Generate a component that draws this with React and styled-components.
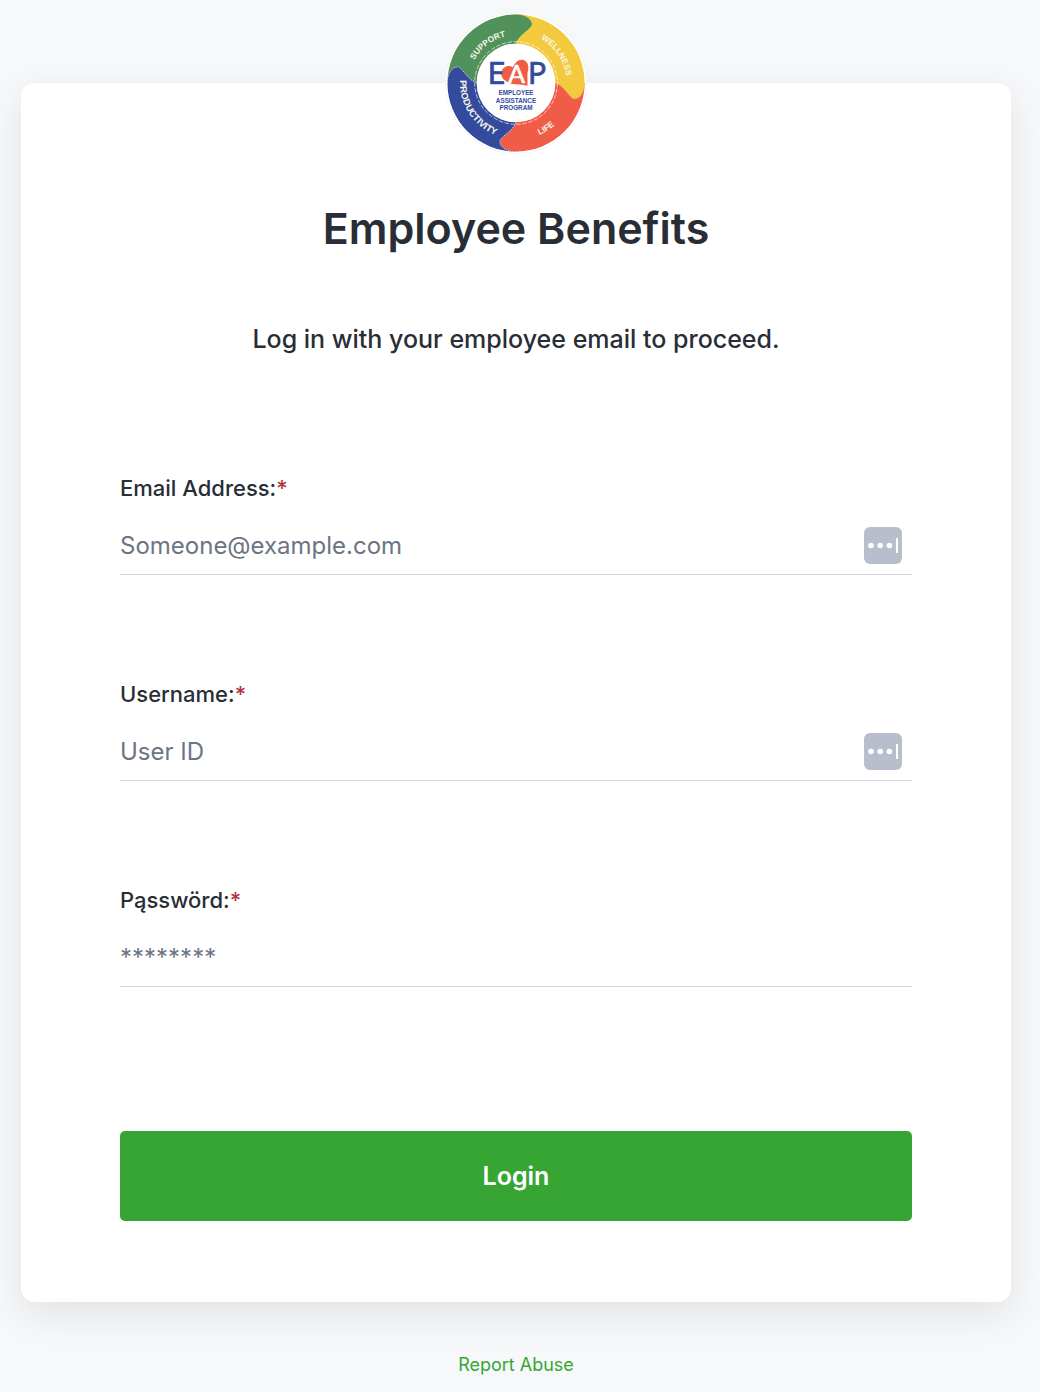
import React from "react";
import styled, { createGlobalStyle } from "styled-components";

const GlobalStyle = createGlobalStyle`
  *, *::before, *::after { box-sizing: border-box; }
  body {
    margin: 0;
    background: #f7f8fa;
    color: #292e36;
    font-family: Inter, "Liberation Sans", sans-serif;
  }
`;

const Page = styled.main`
  display: flex;
  flex-direction: column;
  align-items: center;
  padding: 12px 29px 15px 21px;
`;

const Logo = styled.svg`
  display: block;
  width: 142px;
  height: 142px;
  margin-bottom: -71px;
  z-index: 1;
`;

const Card = styled.section`
  width: 100%;
  padding: 117px 99px 81px;
  border-radius: 14px;
  background: #fff;
  box-shadow: 0 12px 40px rgba(0, 0, 0, 0.09);
`;

const Title = styled.h1`
  margin: 0 0 67px;
  font-size: 43px;
  line-height: 56px;
  font-weight: 600;
  text-align: center;
`;

const Intro = styled.p`
  margin: 0 0 119px;
  font-size: 25px;
  line-height: 32px;
  font-weight: 500;
  text-align: center;
`;

const Form = styled.form`
  display: flex;
  flex-direction: column;
`;

const Fields = styled.div`
  display: flex;
  flex-direction: column;
  gap: 105px;
  margin-bottom: 144px;
`;

const Field = styled.div`
  display: flex;
  flex-direction: column;
  gap: 14px;
`;

const Label = styled.label`
  font-size: 22px;
  line-height: 28px;
  font-weight: 500;
`;

const Required = styled.span`
  color: #b3343f;
`;

const Control = styled.div`
  display: flex;
  align-items: center;
  height: 59px;
  padding-right: 10px;
  border-bottom: 1px solid #d5d7de;
`;

const Input = styled.input`
  flex: 1;
  min-width: 0;
  height: 100%;
  padding: 0;
  border: 0;
  outline: 0;
  background: transparent;
  color: #292e36;
  font: inherit;
  font-size: 24px;

  &::placeholder {
    color: #6b7583;
    opacity: 1;
  }
`;

const FillButton = styled.button`
  flex: none;
  display: block;
  padding: 0;
  border: 0;
  background: none;
  line-height: 0;
  cursor: pointer;
`;

const LoginButton = styled.button`
  height: 90px;
  border: 0;
  border-radius: 5px;
  background: #37a534;
  color: #fff;
  font: inherit;
  font-size: 25px;
  font-weight: 600;
  cursor: pointer;
`;

const ReportLink = styled.a`
  margin-top: 51px;
  color: #37a534;
  font-size: 18px;
  line-height: 24px;
  text-decoration: none;
`;

const SEGMENT =
  "M-206,0 A206,206 0 0 1 0,-206 C34,-206 51,-187 48,-173 C45,-161 9,-144 0,-118 " +
  "A118,118 0 0 0 -118,0 C-144,-9 -161,-45 -173,-48 C-187,-51 -206,-34 -206,0 Z";

const segments = [
  { color: "#51925a", turn: 0 },
  { color: "#f3ca3e", turn: 90 },
  { color: "#f15c48", turn: 180 },
  { color: "#344a9c", turn: 270 },
];

const ringWords = [
  { id: "support", text: "SUPPORT", d: "M-143,0 A143,143 0 0 1 0,-143", at: "59%", size: 25 },
  { id: "wellness", text: "WELLNESS", d: "M0,-152 A152,152 0 0 1 152,0", at: "62%", size: 25 },
  { id: "life", text: "LIFE", d: "M0,171 A171,171 0 0 0 171,0", at: "37%", size: 25 },
  { id: "productivity", text: "PRODUCTIVITY", d: "M-158,-57 A168,168 0 0 0 0,168", at: "48%", size: 28 },
];

function EapLogo() {
  return (
    <Logo viewBox="-213 -213 426 426" role="img" aria-label="EAP Employee Assistance Program">
      <defs>
        <clipPath id="disc"><circle r="206" /></clipPath>
        {ringWords.map((w) => <path key={w.id} id={w.id} d={w.d} />)}
      </defs>
      <circle r="212" fill="#fff" stroke="#eceef1" strokeWidth="2" />
      <g clipPath="url(#disc)">
        {segments.map((s) => (
          <path key={s.color} d={SEGMENT} fill={s.color} stroke={s.color} transform={`rotate(${s.turn})`} />
        ))}
      </g>
      {[180, 270].map((turn) => (
        <path
          key={turn}
          d="M0,-206 C34,-206 51,-187 48,-173 C45,-161 9,-144 0,-118"
          fill="none"
          stroke="#fff"
          strokeWidth="2"
          strokeDasharray="4 3"
          transform={`rotate(${turn})`}
        />
      ))}
      <circle r="124" fill="none" stroke="#fff" strokeOpacity="0.65" strokeWidth="3" strokeDasharray="13 5" />
      <circle r="118" fill="#fff" />
      <g fill="#f6f7e8" fontFamily="Liberation Sans, sans-serif" fontWeight="700" textAnchor="middle">
        {ringWords.map((w) => (
          <text key={w.id} fontSize={w.size}>
            <textPath href={`#${w.id}`} startOffset={w.at}>{w.text}</textPath>
          </text>
        ))}
      </g>
      <path
        d="M-12,3 C-30,-4 -46,-14 -44,-30 C-42,-50 -20,-55 -10,-47 C-4,-60 6,-71 19,-70 C35,-68 41,-50 35,-32 C33,-15 36,-4 34,8 C18,4 5,5 -12,3 Z"
        fill="#f15c48"
      />
      <g fontFamily="Lato, sans-serif" fill="#344a9c">
        <text x="-85" y="2" fontSize="90" stroke="#344a9c" strokeWidth="2">E</text>
        <text x="36" y="2" fontSize="90" stroke="#344a9c" strokeWidth="2">P</text>
        <text x="2" y="1" fontSize="74" fill="#fff" stroke="#fff" strokeWidth="2" textAnchor="middle">A</text>
        <g fontFamily="Liberation Sans, sans-serif" fontSize="19" fontWeight="700" textAnchor="middle">
          <text y="37">EMPLOYEE</text>
          <text y="60">ASSISTANCE</text>
          <text y="82">PROGRAM</text>
        </g>
      </g>
    </Logo>
  );
}

function FillIcon() {
  return (
    <svg width="38" height="37" viewBox="0 0 38 37" aria-hidden="true">
      <rect width="38" height="37" rx="6" fill="#b8becb" />
      <g fill="#fff">
        <circle cx="7" cy="18.5" r="2.8" />
        <circle cx="16.2" cy="18.5" r="2.8" />
        <circle cx="25.4" cy="18.5" r="2.8" />
        <rect x="32" y="11" width="2" height="15" rx="0.5" />
      </g>
    </svg>
  );
}

const fields = [
  { id: "email", label: "Email Address:", type: "email", placeholder: "Someone@example.com", fill: true },
  { id: "username", label: "Username:", type: "text", placeholder: "User ID", fill: true },
  { id: "password", label: "Pąsswörd:", type: "password", placeholder: "********", fill: false },
];

export default function App() {
  return (
    <>
      <GlobalStyle />
      <Page>
        <EapLogo />
        <Card>
          <Title>Employee Benefits</Title>
          <Intro>Log in with your employee email to proceed.</Intro>
          <Form onSubmit={(e) => e.preventDefault()}>
            <Fields>
              {fields.map((f) => (
                <Field key={f.id}>
                  <Label htmlFor={f.id}>
                    {f.label}
                    <Required>*</Required>
                  </Label>
                  <Control>
                    <Input id={f.id} type={f.type} placeholder={f.placeholder} required />
                    {f.fill && (
                      <FillButton type="button" aria-label="Fill from password manager">
                        <FillIcon />
                      </FillButton>
                    )}
                  </Control>
                </Field>
              ))}
            </Fields>
            <LoginButton type="submit">Login</LoginButton>
          </Form>
        </Card>
        <ReportLink href="#report">Report Abuse</ReportLink>
      </Page>
    </>
  );
}
